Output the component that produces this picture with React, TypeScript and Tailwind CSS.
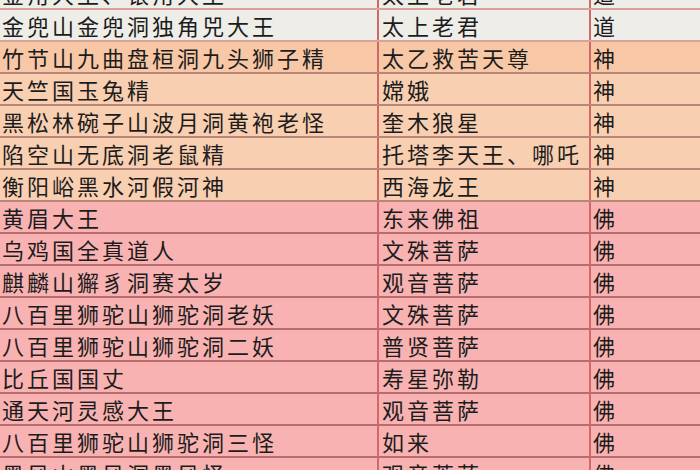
import React from "react";

type Row = { a: string; b: string; c: string; tone: "gray" | "peach" | "peach2" | "pink" };

const rows: Row[] = [
  { a: "金角大王、银角大王", b: "太上老君", c: "道", tone: "gray" },
  { a: "金兜山金兜洞独角兕大王", b: "太上老君", c: "道", tone: "gray" },
  { a: "竹节山九曲盘桓洞九头狮子精", b: "太乙救苦天尊", c: "神", tone: "peach2" },
  { a: "天竺国玉兔精", b: "嫦娥", c: "神", tone: "peach" },
  { a: "黑松林碗子山波月洞黄袍老怪", b: "奎木狼星", c: "神", tone: "peach" },
  { a: "陷空山无底洞老鼠精", b: "托塔李天王、哪吒", c: "神", tone: "peach" },
  { a: "衡阳峪黑水河假河神", b: "西海龙王", c: "神", tone: "peach" },
  { a: "黄眉大王", b: "东来佛祖", c: "佛", tone: "pink" },
  { a: "乌鸡国全真道人", b: "文殊菩萨", c: "佛", tone: "pink" },
  { a: "麒麟山獬豸洞赛太岁", b: "观音菩萨", c: "佛", tone: "pink" },
  { a: "八百里狮驼山狮驼洞老妖", b: "文殊菩萨", c: "佛", tone: "pink" },
  { a: "八百里狮驼山狮驼洞二妖", b: "普贤菩萨", c: "佛", tone: "pink" },
  { a: "比丘国国丈", b: "寿星弥勒", c: "佛", tone: "pink" },
  { a: "通天河灵感大王", b: "观音菩萨", c: "佛", tone: "pink" },
  { a: "八百里狮驼山狮驼洞三怪", b: "如来", c: "佛", tone: "pink" },
  { a: "黑风山黑风洞黑风怪", b: "观音菩萨", c: "佛", tone: "pink" },
];

const toneClass: Record<Row["tone"], string> = {
  gray: "bg-[#eeede8] border-[#d9a29a]",
  peach2: "bg-[#f8c8a6] border-[#b9877a]",
  peach: "bg-[#f9cfb1] border-[#b9877a]",
  pink: "bg-[#f8b2b2] border-[#b86e6e]",
};

export default function App() {
  return (
    <div
      className="w-[700px] h-[470px] overflow-hidden bg-[#f8b2b2] text-[#1c1c1c] text-[22px] tracking-[3px]"
      style={{ fontFamily: '"Noto Sans CJK SC", "Noto Sans", sans-serif' }}
    >
      <div className="mt-[-22px]">
        {rows.map((r, i) => (
          <div key={i} className={`flex h-[32px] border-b-2 ${toneClass[r.tone]}`}>
            <div className="w-[377px] shrink-0 pl-[2px] flex items-center leading-none whitespace-nowrap">
              {r.a}
            </div>
            <div className="w-[212px] shrink-0 border-l-2 border-[#d26868] pl-[3px] flex items-center leading-none whitespace-nowrap">
              {r.b}
            </div>
            <div className="flex-1 border-l-2 border-[#d26868] pl-[2px] flex items-center leading-none whitespace-nowrap">
              {r.c}
            </div>
          </div>
        ))}
      </div>
    </div>
  );
}
